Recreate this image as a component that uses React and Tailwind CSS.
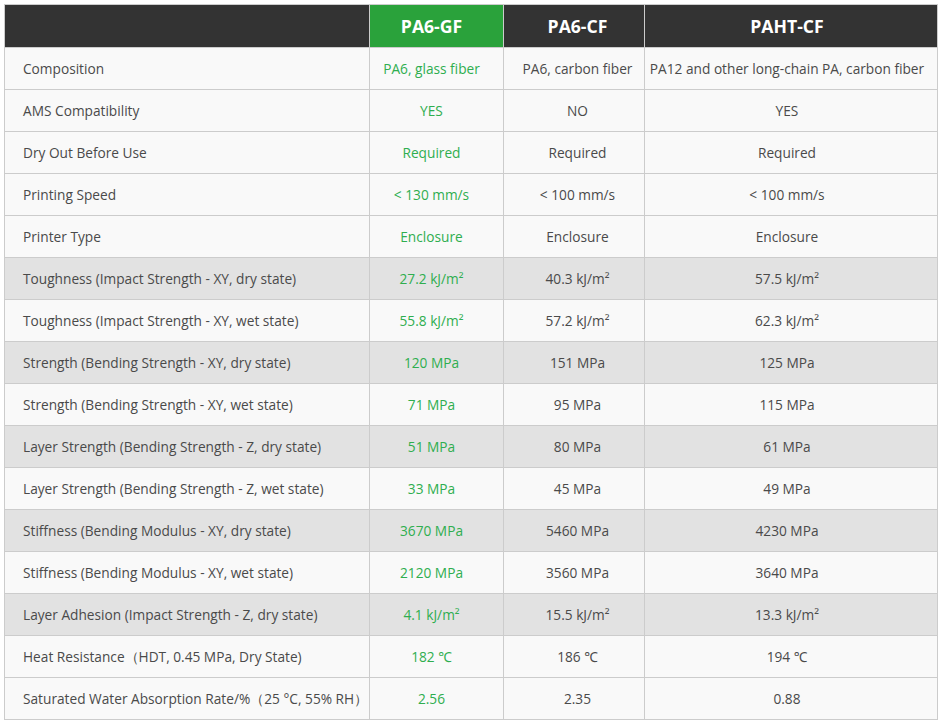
import React from "react";

const G = "text-[#2fae4f]";

const rows = [
  ["Composition", "PA6, glass fiber", "PA6, carbon fiber", "PA12 and other long-chain PA, carbon fiber", false],
  ["AMS Compatibility", "YES", "NO", "YES", false],
  ["Dry Out Before Use", "Required", "Required", "Required", false],
  ["Printing Speed", "< 130 mm/s", "< 100 mm/s", "< 100 mm/s", false],
  ["Printer Type", "Enclosure", "Enclosure", "Enclosure", false],
  ["Toughness (Impact Strength - XY, dry state)", "27.2 kJ/m²", "40.3 kJ/m²", "57.5 kJ/m²", true],
  ["Toughness (Impact Strength - XY, wet state)", "55.8 kJ/m²", "57.2 kJ/m²", "62.3 kJ/m²", false],
  ["Strength (Bending Strength - XY, dry state)", "120 MPa", "151 MPa", "125 MPa", true],
  ["Strength (Bending Strength - XY, wet state)", "71 MPa", "95 MPa", "115 MPa", false],
  ["Layer Strength (Bending Strength - Z, dry state)", "51 MPa", "80 MPa", "61 MPa", true],
  ["Layer Strength (Bending Strength - Z, wet state)", "33 MPa", "45 MPa", "49 MPa", false],
  ["Stiffness (Bending Modulus - XY, dry state)", "3670 MPa", "5460 MPa", "4230 MPa", true],
  ["Stiffness (Bending Modulus - XY, wet state)", "2120 MPa", "3560 MPa", "3640 MPa", false],
  ["Layer Adhesion (Impact Strength - Z, dry state)", "4.1 kJ/m²", "15.5 kJ/m²", "13.3 kJ/m²", true],
  ["Heat Resistance（HDT, 0.45 MPa, Dry State)", "182 ℃", "186 ℃", "194 ℃", false],
  ["Saturated Water Absorption Rate/%（25 °C, 55% RH）", "2.56", "2.35", "0.88", false],
];

export default function App() {
  return (
    <div className="bg-white w-[940px] h-[728px] pt-[4px] pl-[4px]" style={{ fontFamily: '"Open Sans", "Noto Sans", sans-serif' }}>
      <table className="table-fixed border-collapse w-[933px] text-[13.7px] text-[#4a4a4a]">
        <colgroup>
          <col className="w-[365px]" />
          <col className="w-[134px]" />
          <col className="w-[141px]" />
          <col className="w-[293px]" />
        </colgroup>
        <thead>
          <tr>
            <th className="h-[43px] border border-[#cccccc] bg-[#333333]"></th>
            <th className="h-[43px] border border-[#cccccc] bg-[#2aa23b] text-white text-[17.6px] font-bold p-0 pr-[10px]">PA6-GF</th>
            <th className="h-[43px] border border-[#cccccc] bg-[#333333] text-white text-[17.6px] font-bold p-0 pl-[7px]">PA6-CF</th>
            <th className="h-[43px] border border-[#cccccc] bg-[#333333] text-white text-[17.6px] font-bold p-0 pr-[8px]">PAHT-CF</th>
          </tr>
        </thead>
        <tbody>
          {rows.map(([label, a, b, c, shade]) => (
            <tr key={label} className={shade ? "bg-[#e2e2e2]" : "bg-[#f9f9f9]"}>
              <td className="h-[42px] border border-[#cccccc] p-0 pt-[2px] pl-[18px] whitespace-nowrap">{label}</td>
              <td className={`h-[42px] border border-[#cccccc] text-center p-0 pt-[2px] pr-[10px] whitespace-nowrap ${G}`}>{a}</td>
              <td className="h-[42px] border border-[#cccccc] text-center p-0 pt-[2px] pl-[7px] whitespace-nowrap">{b}</td>
              <td className="h-[42px] border border-[#cccccc] text-center p-0 pt-[2px] pr-[8px] whitespace-nowrap">{c}</td>
            </tr>
          ))}
        </tbody>
      </table>
    </div>
  );
}
